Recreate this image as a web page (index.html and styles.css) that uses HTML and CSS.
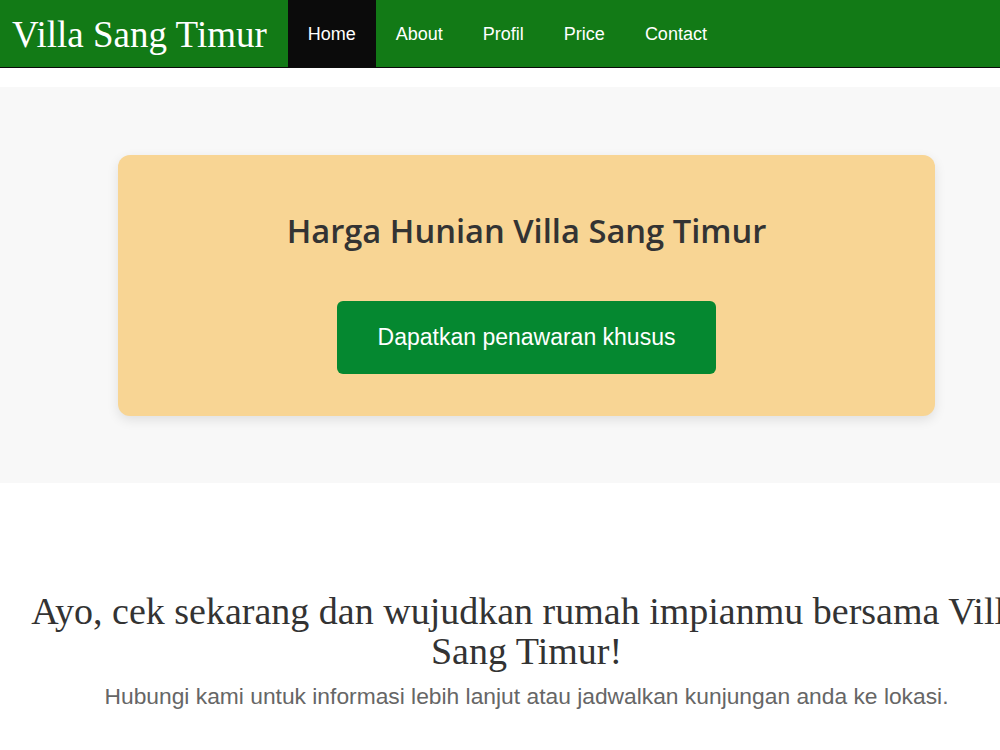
FILE: index.html
```html
<!DOCTYPE html>
<html>
<head>
  <title>Villa Sang Timur</title>
  <link rel="stylesheet" href="styles.css">
</head>
<body>

  <div class="page">
    <header class="navbar">
      <div class="logo">Villa Sang Timur</div>
      <ul class="menu">
        <li><a href="#" class="active">Home</a></li>
        <li><a href="#">About</a></li>
        <li><a href="#">Profil</a></li>
        <li><a href="#">Price</a></li>
        <li><a href="#">Contact</a></li>
      </ul>
    </header>

    <section class="price">
      <div class="price-card">
        <h2>Harga Hunian Villa Sang Timur</h2>
        <a href="#" class="btn">Dapatkan penawaran khusus</a>
      </div>
    </section>

    <section class="cta">
      <h1>Ayo, cek sekarang dan wujudkan rumah impianmu bersama Villa Sang Timur!</h1>
      <p>Hubungi kami untuk informasi lebih lanjut atau jadwalkan kunjungan anda ke lokasi.</p>
    </section>
  </div>

</body>
</html>
```

FILE: styles.css
```css
body {
  margin: 0;
  font-family: "Liberation Sans", Arial, sans-serif;
  background: #ffffff;
}

.page {
  width: 1053px;
}

/* Navbar */
.navbar {
  display: flex;
  align-items: stretch;
  height: 67px;
  background: #127a16;
  border-bottom: 1px solid #0b0b0b;
}

.logo {
  font-family: "Liberation Serif", Georgia, serif;
  font-size: 37px;
  color: #ffffff;
  padding: 2px 21px 0 12px;
  display: flex;
  align-items: center;
}

.menu {
  display: flex;
  list-style: none;
  margin: 0;
  padding: 0;
}

.menu a {
  display: flex;
  align-items: center;
  height: 100%;
  box-sizing: border-box;
  padding: 2px 20px 0;
  color: #ffffff;
  text-decoration: none;
  font-size: 18px;
}

.menu a.active {
  background: #0b0b0b;
}

/* Price section */
.price {
  background: #f8f8f8;
  margin-top: 19px;
  padding: 68px 0 67px;
}

.price-card {
  width: 817px;
  margin: 0 auto;
  box-sizing: border-box;
  background: #f8d594;
  border-radius: 12px;
  box-shadow: 0 4px 12px rgba(0, 0, 0, 0.1);
  display: flex;
  flex-direction: column;
  align-items: center;
  padding: 54px 0 42px;
}

.price-card h2 {
  font-family: "Open Sans", "Noto Sans", sans-serif;
  font-weight: 600;
  font-size: 32.7px;
  line-height: 44px;
  color: #333333;
  margin: 0 0 48px;
}

.btn {
  display: block;
  background: #058830;
  color: #ffffff;
  text-decoration: none;
  font-size: 23px;
  line-height: 27px;
  padding: 23px 41px;
  border-radius: 6px;
}

/* Call to action */
.cta {
  text-align: center;
  padding: 108px 20px 40px;
}

.cta h1 {
  font-family: "Liberation Serif", Georgia, serif;
  font-weight: normal;
  font-size: 38px;
  line-height: 40px;
  color: #333333;
  margin: 0 0 12px;
}

.cta p {
  font-size: 22.8px;
  line-height: 26px;
  color: #666666;
  margin: 0;
}
```
